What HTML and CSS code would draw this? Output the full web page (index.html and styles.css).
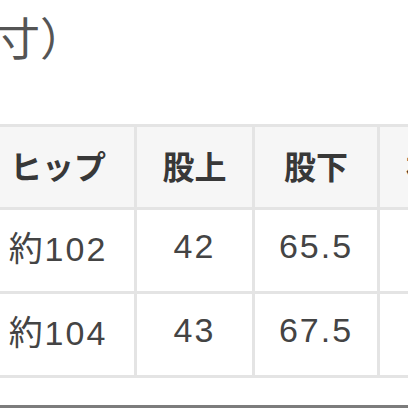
FILE: index.html
```html
<!DOCTYPE html>
<html lang="ja">
<head>
<meta charset="utf-8">
<link rel="stylesheet" href="styles.css">
</head>
<body>
<div class="page">
  <h2 class="title">（実寸）</h2>
  <div class="size-table">
    <div class="cell head">ヒップ</div>
    <div class="cell head">股上</div>
    <div class="cell head">股下</div>
    <div class="cell head last">裾幅</div>
    <div class="cell">約102</div>
    <div class="cell">42</div>
    <div class="cell">65.5</div>
    <div class="cell"></div>
    <div class="cell">約104</div>
    <div class="cell">43</div>
    <div class="cell">67.5</div>
    <div class="cell"></div>
  </div>
  <div class="rule"></div>
</div>
</body>
</html>
```

FILE: styles.css
```css
html, body {
  margin: 0;
  padding: 0;
  background: #ffffff;
}
body {
  width: 408px;
  height: 408px;
  overflow: hidden;
}
.page {
  width: 408px;
  height: 408px;
  overflow: hidden;
}
.title {
  margin: 14px 0 0 -95px;
  font-family: "Noto Sans CJK JP", sans-serif;
  font-size: 45px;
  font-weight: 400;
  line-height: 45px;
  color: #555555;
  white-space: nowrap;
}
.size-table {
  margin: 65px 0 0 -21px;
  width: max-content;
  display: grid;
  grid-template-columns: 152px 115px 122px 122px;
  grid-template-rows: 80px 81px 81px;
  gap: 3px;
  border: 3px solid #e4e4e4;
  background: #e4e4e4;
}
.cell {
  background: #ffffff;
  display: flex;
  align-items: center;
  justify-content: center;
  font-family: "Liberation Sans", "Noto Sans CJK JP", sans-serif;
  font-size: 34px;
  letter-spacing: 2px;
  color: #444444;
  padding-bottom: 8px;
  box-sizing: border-box;
  white-space: nowrap;
}
.cell.head {
  background: #f6f6f6;
  font-family: "Noto Sans CJK JP", sans-serif;
  font-size: 32px;
  font-weight: 700;
  letter-spacing: 0;
  color: #383838;
  padding-bottom: 4px;
}
.cell.head.last {
  justify-content: flex-start;
  padding-left: 26px;
}
.rule {
  margin-top: 27px;
  height: 3px;
  background: #7c7c7c;
}
```
